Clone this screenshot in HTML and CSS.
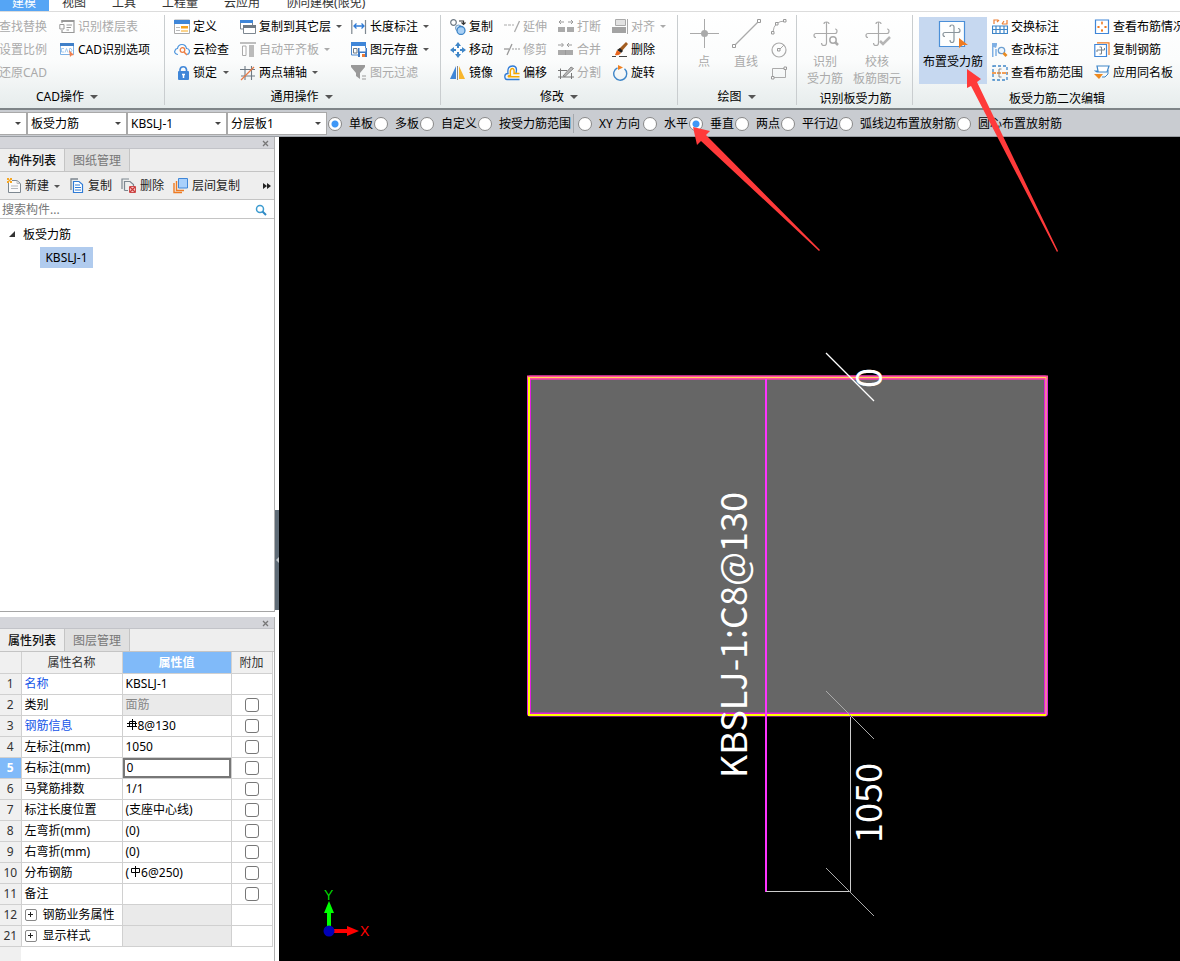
FILE: index.html
```html
<!DOCTYPE html>
<html lang="zh-CN">
<head>
<meta charset="utf-8">
<title>板受力筋</title>
<link rel="stylesheet" href="styles.css">
</head>
<body>
<div class="app">
  <nav class="menu">
    <button class="menu-tab active">建模</button><button class="menu-tab">视图</button><button class="menu-tab">工具</button><button class="menu-tab">工程量</button><button class="menu-tab">云应用</button><button class="menu-tab">协同建模(限免)</button>
  </nav>

  <header class="ribbon">
    <section class="group g-cad">
      <div class="tools">
        <div class="col">
          <button class="tool off">查找替换</button>
          <button class="tool off">设置比例</button>
          <button class="tool off">还原CAD</button>
        </div>
        <div class="col">
          <button class="tool off"><svg class="ico" viewBox="0 0 16 16"><path d="M3 4V1.500H15V13.500H3V11" fill="none" stroke="#999" stroke-width="1.200"/><path d="M2.500 2H15" stroke="#999" stroke-width="2"/><path d="M.8 5.500H5V10H.8Z" fill="#fff" stroke="#999"/><path d="M7.500 6H13M7.500 8.500H12M7.500 11H10" stroke="#999" stroke-width="1.200"/></svg>识别楼层表</button>
          <button class="tool"><svg class="ico" viewBox="0 0 16 16"><path d="M1.500 1.500H14.500V12.500H1.500Z" fill="#fff" stroke="#7fb2e6"/><path d="M1 1H15V4H1Z" fill="#3f7fc8"/><path d="M5 6.500H2.500V10H5M6 10.500L7.500 6.500L9 10.500M10.500 6.500V10H12L13 8.500L12 6.500Z" fill="none" stroke="#8fbce8" stroke-width=".8"/><path d="M10 8L15 13L12.500 13.500L11 15Z" fill="#ee8050"/></svg>CAD识别选项</button>
        </div>
      </div>
      <button class="caption">CAD操作<i class="caret"></i></button>
    </section>

    <section class="group g-common">
      <div class="tools">
        <div class="col">
          <button class="tool"><svg class="ico" viewBox="0 0 16 16"><path d="M.5 1H15.500V14.500H.5Z" fill="#fff" stroke="#aaa"/><path d="M0 1H16V5H0Z" fill="#3f86d8"/><path d="M2 8.500H6M2 11.500H6" stroke="#bbb"/><path d="M7 7H14V9.500H7Z" fill="#f6a21c"/><path d="M7 11H14V13H7Z" fill="#fbd38b"/></svg>定义</button>
          <button class="tool"><svg class="ico" viewBox="0 0 16 16"><path d="M4 12.500C1 12.500 .2 10 1 8.500C1.500 7 3 6.500 3.500 6.500C4 3.500 6 2.500 8 2.500C10.500 2.500 12 4 12.500 6.500C14.500 6.500 15.500 8 15.500 9.500C15.500 11.500 14 12.500 12.500 12.500" fill="none" stroke="#4b93dc" stroke-width="1.200"/><circle cx="8.500" cy="8" r="2.300" fill="none" stroke="#ee7f44" stroke-width="1.300"/><path d="M10 10L13 13" stroke="#ee7f44" stroke-width="1.500"/></svg>云检查</button>
          <button class="tool"><svg class="ico" viewBox="0 0 16 16"><path d="M6 7V4.500A3.300 3.300 0 0 1 12.500 4.500V7" fill="none" stroke="#3f86d8" stroke-width="1.600"/><rect x="4" y="6" width="11" height="9" rx="1" fill="#3f86d8"/><path d="M9.500 9V13M8 9.500H11" stroke="#fff" stroke-width="1.500"/></svg>锁定<i class="caret"></i></button>
        </div>
        <div class="col">
          <button class="tool"><svg class="ico" viewBox="0 0 16 16"><path d="M.5 1.500H12.500V10H.5Z" fill="#fff" stroke="#7d8790"/><path d="M0 1H13V4H0Z" fill="#3f86d8"/><path d="M3.500 7.500H15.500V14.500H3.500Z" fill="#fff" stroke="#7d8790"/><path d="M3 6H16V9H3Z" fill="#6f7a84"/></svg>复制到其它层<i class="caret wide"></i></button>
          <button class="tool off"><svg class="ico" viewBox="0 0 16 16"><path d="M0 1H16" stroke="#aaa" stroke-width="1.500"/><path d="M2.500 4H6V13.500H2.500Z" fill="#fff" stroke="#aaa"/><path d="M9 3H14V15H9Z" fill="#bbb"/></svg>自动平齐板<i class="caret wide"></i></button>
          <button class="tool"><svg class="ico" viewBox="0 0 16 16"><path d="M5 1V15M11.500 1V15M0 4.500H15M1 11H15" stroke="#6f7a84" stroke-width="1.100"/><path d="M1 15L14 2" stroke="#e87a45" stroke-width="1.300"/></svg>两点辅轴<i class="caret wide"></i></button>
        </div>
        <div class="col">
          <button class="tool"><svg class="ico" viewBox="0 0 16 16"><path d="M.8 1V15M14.500 1V15" stroke="#7d8790" stroke-width="1.200"/><path d="M3 7H13M5.500 4.500L3 7L5.500 9.500M10.500 4.500L13 7L10.500 9.500" fill="none" stroke="#2f7bd6" stroke-width="1.300"/></svg>长度标注<i class="caret wide"></i></button>
          <button class="tool"><svg class="ico" viewBox="0 0 16 16"><path d="M.5 1.500H14.500V13H.5Z" fill="#fff" stroke="#4a86cc"/><path d="M0 0H15V4H0Z" fill="#3f86d8"/><path d="M2.500 6.500H6V11H2.500Z" fill="none" stroke="#6f7a84"/><path d="M7 6H16V15H7Z" fill="#3d78c2"/><path d="M8.500 6H14.500V9.500H8.500Z" fill="#fff"/><path d="M9 11H14V15H9Z" fill="#fff"/><path d="M11 12H14V15H11Z" fill="#ee7b33"/></svg>图元存盘<i class="caret wide"></i></button>
          <button class="tool off"><svg class="ico" viewBox="0 0 16 16"><path d="M0 0H14V2L9 8V14L5 11V8L0 2Z" fill="#999"/><path d="M11 11H15M11 14H15" stroke="#999"/></svg>图元过滤</button>
        </div>
      </div>
      <button class="caption">通用操作<i class="caret"></i></button>
    </section>

    <section class="group g-edit">
      <div class="tools">
        <div class="col">
          <button class="tool"><svg class="ico" viewBox="0 0 16 16"><circle cx="3.500" cy="3.500" r="2.800" fill="#fff" stroke="#6f7a84" stroke-width="1.200"/><path d="M9 2H13.500V5M11.500 3.500L13.500 5.500L15.500 3.500" fill="none" stroke="#333" stroke-width="1.200"/><circle cx="8.500" cy="9" r="3" fill="#d5e7f7" stroke="#6f9bc4"/><circle cx="11" cy="11.500" r="4" fill="#a9d0f5" stroke="#3f86c8" stroke-width="1.300"/></svg>复制</button>
          <button class="tool"><svg class="ico" viewBox="0 0 16 16"><path d="M8 0L11 4H9V6H7V4H5ZM8 16L5 12H7V10H9V12H11ZM0 8L4 5V7H6V9H4V11ZM16 8L12 11V9H10V7H12V5Z" fill="#3f86c8"/></svg>移动</button>
          <button class="tool"><svg class="ico" viewBox="0 0 16 16"><path d="M6 1V14H0Z" fill="#3f86d8"/><path d="M7.500 1V15" stroke="#888"/><path d="M9 1V14H15Z" fill="#f8b62d"/></svg>镜像</button>
        </div>
        <div class="col">
          <button class="tool off"><svg class="ico" viewBox="0 0 16 16"><path d="M0 6H10" stroke="#aaa" stroke-dasharray="3 1"/><path d="M10.500 13L15.500 2" stroke="#aaa" stroke-width="1.300"/></svg>延伸</button>
          <button class="tool off"><svg class="ico" viewBox="0 0 16 16"><path d="M0 7H5" stroke="#999" stroke-width="1.300"/><path d="M8 7H16" stroke="#999" stroke-dasharray="2 1"/><path d="M3 13L8 2" stroke="#999" stroke-width="1.300"/></svg>修剪</button>
          <button class="tool"><svg class="ico" viewBox="0 0 16 16"><path d="M15.500 14.500H3Q.8 14.500 .8 11.500Q.8 8.500 4 8.500Q3 1 8.500 1Q12.500 1 12.500 5L12 8.500" fill="none" stroke="#2f7bd6" stroke-width="1.300"/><path d="M15.500 11.800H4.500Q3.500 10.500 6.500 10.500Q5.500 3.500 8.500 3.500Q10.500 3.500 10 8.500H15.500" fill="none" stroke="#f6a800" stroke-width="1.400"/></svg>偏移</button>
        </div>
        <div class="col">
          <button class="tool off"><svg class="ico" viewBox="0 0 16 16"><path d="M0 8H7V13H0ZM9 8H16V13H9Z" fill="#aaa"/><path d="M1 3H6M3 1L1 3L3 5M10 3H15M13 1L15 3L13 5" fill="none" stroke="#999"/></svg>打断</button>
          <button class="tool off"><svg class="ico" viewBox="0 0 16 16"><path d="M0 8H15V13H0Z" fill="#aaa"/><path d="M0 3H5M3.500 1L5.500 3L3.500 5M9 3H14M11 1L9 3L11 5M7.500 8V13" fill="none" stroke="#999"/></svg>合并</button>
          <button class="tool off"><svg class="ico" viewBox="0 0 16 16"><path d="M0 5.500H9M2.500 3.500V14M0 12H16M13.500 8V14" fill="none" stroke="#777"/><path d="M5 11L13 2L15.500 3.500L7 11.500Z" fill="#bbb" stroke="#666" stroke-width=".7"/></svg>分割</button>
        </div>
        <div class="col">
          <button class="tool off"><svg class="ico" viewBox="0 0 16 16"><path d="M3.500 .5H13.500V6.500H3.500Z" fill="#e2e2e2" stroke="#aaa"/><path d="M0 8H14V14H0Z" fill="#a3a3a3"/><path d="M15.500 0V15" stroke="#aaa"/></svg>对齐<i class="caret wide"></i></button>
          <button class="tool"><svg class="ico" viewBox="0 0 16 16"><path d="M14 0L16 2L10 9L7 7Z" fill="#a35d20"/><path d="M8 6L11 9L9 11L5 8Z" fill="#222"/><path d="M5 8L9 11Q7 14 3 13Z" fill="#e8641b"/><path d="M0 14.500H4M7 14.500H15" stroke="#444"/></svg>删除</button>
          <button class="tool"><svg class="ico" viewBox="0 0 16 16"><path d="M5.500 2.800A6.500 6.500 0 1 0 12.500 3.800" fill="none" stroke="#3f86c8" stroke-width="1.400"/><path d="M6 0L11 2.500L6 5Z" fill="#f08020"/></svg>旋转</button>
        </div>
      </div>
      <button class="caption">修改<i class="caret"></i></button>
    </section>

    <section class="group g-draw">
      <div class="tools">
        <button class="big off"><svg class="bigico" viewBox="0 0 30 32"><path d="M15.500 1V30M1 15.500H30" stroke="#aaa"/><circle cx="15.500" cy="15.500" r="3.500" fill="#aaa"/></svg>点</button>
        <button class="big off"><svg class="bigico" viewBox="0 0 30 32"><path d="M4 27L27 4" stroke="#aaa" stroke-width="1.200"/><path d="M1.500 26.500H4.500V29.500H1.500ZM26.500 1.500H29.500V4.500H26.500Z" fill="#fff" stroke="#999"/></svg>直线</button>
        <div class="col">
          <button class="tool off" aria-label="弧"><svg class="ico" viewBox="0 0 16 16"><path d="M2 13Q3 2 14 2" fill="none" stroke="#aaa"/><path d="M.5 12.500H3V15H.5ZM4.500 3.500H7V6H4.500ZM12.500 .5H15V3H12.500Z" fill="#fff" stroke="#999"/></svg></button>
          <button class="tool off" aria-label="圆"><svg class="ico" viewBox="0 0 16 16"><circle cx="8" cy="8" r="7" fill="none" stroke="#aaa" stroke-width="1.200"/><path d="M8 8L13 3" stroke="#aaa"/><path d="M6.500 6.500H9V9H6.500Z" fill="#fff" stroke="#999"/></svg></button>
          <button class="tool off" aria-label="矩形"><svg class="ico" viewBox="0 0 16 16"><path d="M1.500 3.500H14.500V12.500H1.500Z" fill="none" stroke="#aaa"/><path d="M.5 11.500H3V14H.5ZM13 2H15.500V4.500H13Z" fill="#fff" stroke="#999"/></svg></button>
        </div>
      </div>
      <button class="caption">绘图<i class="caret"></i></button>
    </section>

    <section class="group g-detect">
      <div class="tools">
        <button class="big off"><svg class="bigico" viewBox="0 0 30 32"><path d="M14 6Q14 4 16.500 4Q19 4 19 6M16.500 4V25Q16.500 27.500 14 27.500Q11.500 27.500 11.500 25M6 19.500Q4 19.500 4 17.500Q4 15.500 6 15.500H25Q27 15.500 27 13Q27 11 25 11" fill="none" stroke="#aaa" stroke-width="1.200"/><circle cx="23" cy="22" r="3.200" fill="#fff" stroke="#aaa" stroke-width="1.500"/><path d="M25 24L28 27" stroke="#aaa" stroke-width="2.500"/></svg>识别<br>受力筋</button>
        <button class="big off"><svg class="bigico" viewBox="0 0 30 32"><path d="M14 6Q14 4 16.500 4Q19 4 19 6M16.500 4V25Q16.500 27.500 14 27.500Q11.500 27.500 11.500 25M6 19.500Q4 19.500 4 17.500Q4 15.500 6 15.500H25Q27 15.500 27 13Q27 11 25 11" fill="none" stroke="#aaa" stroke-width="1.200"/><path d="M18 23L21 26L28 19" fill="none" stroke="#b5b5b5" stroke-width="2.500"/></svg>校核<br>板筋图元</button>
      </div>
      <div class="caption low">识别板受力筋</div>
    </section>

    <section class="group g-second">
      <div class="tools">
        <button class="big chosen"><svg class="bigico" viewBox="0 0 30 32"><path d="M1.500 3.500H26.500V28.500H1.500Z" fill="#fdfefe" stroke="#4b8fd8" stroke-width="1.200"/><path d="M12 9Q12 7 14 7Q16 7 16 9V22Q16 24.500 14 24.500Q12 24.500 12 22M7 18.500Q5 18.500 5 16.500Q5 14.500 7 14.500H20Q22 14.500 22 12.500Q22 10.500 20 10.500" fill="none" stroke="#8a959c" stroke-width="1.200"/><path d="M21 20L30 27L25 27L21 30Z" fill="#ee7b23"/></svg>布置受力筋</button>
        <div class="col">
          <button class="tool"><svg class="ico" viewBox="0 0 16 16"><path d="M.5 7H15.500V14.500H.5ZM.5 10.500H15.500M4 7V14.500M8 7V14.500M12 7V14.500" fill="none" stroke="#3f86c8" stroke-width="1.200"/><path d="M2 5V1H6M5 3L7 1M15 1V5H10M12 2L10 5" fill="none" stroke="#ee7f33" stroke-width="1.200"/></svg>交换标注</button>
          <button class="tool"><svg class="ico" viewBox="0 0 16 16"><path d="M0 1H5V3L4 6L1.500 5V15H0Z" fill="#7fb0e4"/><path d="M4 7V14" stroke="#7fb0e4" stroke-width="1.500"/><circle cx="9.500" cy="8.500" r="3.200" fill="#eef6fd" stroke="#6d9fd0" stroke-width="1.300"/><path d="M11.500 11L14.500 14" stroke="#e88a20" stroke-width="2.800"/></svg>查改标注</button>
          <button class="tool"><svg class="ico" viewBox="0 0 16 16"><path d="M1 1H15V15H1Z" fill="none" stroke="#3f86c8" stroke-width="1.300" stroke-dasharray="3 2"/><path d="M0 8H16" stroke="#f08020" stroke-width="1.300" stroke-dasharray="4 1"/><path d="M9.500 4H7V12H9.500" fill="none" stroke="#888"/></svg>查看布筋范围</button>
        </div>
        <div class="col">
          <button class="tool"><svg class="ico" viewBox="0 0 16 16"><path d="M1.500 1H14.500V14.500H1.500Z" fill="#fff" stroke="#3f86d8" stroke-width="1.200"/><path d="M8 2.500V5.500M7 4H9M8 10V13M7 11.500H9M3 8H6M4.500 7V9M10 8H13M11.500 7V9" fill="none" stroke="#ee7b23" stroke-width="1.200"/></svg>查看布筋情况</button>
          <button class="tool"><svg class="ico" viewBox="0 0 16 16"><path d="M3 .8H15V13" fill="none" stroke="#ee7b23" stroke-width="1.200"/><path d="M.8 2.500H12.500V14.500H.8Z" fill="#fff" stroke="#3f86d8" stroke-width="1.200"/><path d="M5.500 5H7.500V12H5.500M3 10V8H10.500V6" fill="none" stroke="#78838c"/></svg>复制钢筋</button>
          <button class="tool"><svg class="ico" viewBox="0 0 16 16"><path d="M3 1H15L13 7H3L1.500 6H4Z" fill="#fff" stroke="#3f86c8" stroke-width="1.200"/><path d="M14 5V9L11 12H8" fill="none" stroke="#3f86c8"/><path d="M0 9H9L5 14Z" fill="#ee8a20"/></svg>应用同名板</button>
        </div>
      </div>
      <div class="caption low">板受力筋二次编辑</div>
    </section>
  </header>

  <form class="options">
    <span class="pick first"><select aria-label="楼层"><option></option></select></span>
    <span class="pick"><select aria-label="构件类型"><option>板受力筋</option></select></span>
    <span class="pick"><select aria-label="构件"><option>KBSLJ-1</option></select></span>
    <span class="pick"><select aria-label="分层"><option>分层板1</option></select></span>
    <div class="radios">
      <label><input type="radio" name="range" checked>单板</label>
      <label><input type="radio" name="range">多板</label>
      <label><input type="radio" name="range">自定义</label>
      <label><input type="radio" name="range">按受力筋范围</label>
    </div>
    <div class="radios second">
      <label class="xy"><input type="radio" name="dir">XY 方向</label>
      <label><input type="radio" name="dir">水平</label>
      <label><input type="radio" name="dir" checked>垂直</label>
      <label><input type="radio" name="dir">两点</label>
      <label><input type="radio" name="dir">平行边</label>
      <label><input type="radio" name="dir">弧线边布置放射筋</label>
      <label><input type="radio" name="dir">圆心布置放射筋</label>
    </div>
  </form>

  <main class="work">
    <aside class="side">
      <section class="panel list">
        <div class="strip"><button class="close" aria-label="关闭"><svg viewBox="0 0 7 7"><path d="M1 1L6 6M6 1L1 6" stroke="#777" stroke-width="1.300"/></svg></button></div>
        <div class="tabs"><button class="tab on">构件列表</button><button class="tab">图纸管理</button></div>
        <div class="bar">
          <button class="act"><svg class="ico" viewBox="0 0 16 16"><path d="M2.500 4V14.500H14.500V5.500L11 2.500H6" fill="#fafafa" stroke="#7d8790"/><path d="M11 2.500V5.500H14.500M5 8H12M5 10.500H12" fill="none" stroke="#b5b9bd"/><path d="M1 0H3V2H1ZM4 0H6V2H4ZM1 3H3V5H1ZM4 3H6V5H4ZM2.500 1.500H4.500V3.500H2.500Z" fill="#f5a623"/></svg>新建<i class="caret"></i></button>
          <button class="act"><svg class="ico" viewBox="0 0 16 16"><path d="M2 12V1H9" fill="none" stroke="#7d8790" stroke-width="1.300"/><path d="M4.500 3.500H10L13.500 6.500V14.500H4.500Z" fill="#fff" stroke="#2f7bd6" stroke-width="1.200"/><path d="M6 7H11M6 9.500H12M6 12H12" stroke="#2f7bd6"/></svg>复制</button>
          <button class="act"><svg class="ico" viewBox="0 0 16 16"><path d="M1 11V1H8M3.500 12.500V3.500H9L12.500 6.500V8M3.500 12.500H7" fill="none" stroke="#7d8790" stroke-width="1.200"/><path d="M8.500 8.500H14.500V14.500H8.500Z" fill="#f6c6c6" stroke="#cc4b4b"/><path d="M9 9L14 14M14 9L9 14" stroke="#c93a3a" stroke-width="1.200"/></svg>删除</button>
          <button class="act"><svg class="ico" viewBox="0 0 16 16"><path d="M1 5V14.500H9" fill="none" stroke="#ee7b23" stroke-width="1.400"/><path d="M3.500 3V12.500H11" fill="none" stroke="#ee7b23" stroke-width="1.400"/><path d="M5.500 .5H14.500V10H5.500Z" fill="#a9d0fb" stroke="#3f86d8"/></svg>层间复制</button>
          <button class="more" aria-label="更多"><svg viewBox="0 0 8 6"><path d="M0 0L4 3L0 6ZM4 0L8 3L4 6Z" fill="#222"/></svg></button>
        </div>
        <label class="search"><input type="text" placeholder="搜索构件..." aria-label="搜索构件"><svg viewBox="0 0 12 12"><circle cx="5" cy="5" r="3.500" fill="#fff" stroke="#3c9bd0" stroke-width="1.500"/><path d="M7.500 7.500L11 11" stroke="#2f8ac4" stroke-width="2"/></svg></label>
        <div class="tree">
          <div class="node"><svg viewBox="0 0 7 7"><path d="M6 0V6H0Z" fill="#333"/></svg>板受力筋</div>
          <div class="leaf"><span>KBSLJ-1</span></div>
        </div>
      </section>

      <section class="panel props">
        <div class="strip"><button class="close" aria-label="关闭"><svg viewBox="0 0 7 7"><path d="M1 1L6 6M6 1L1 6" stroke="#777" stroke-width="1.300"/></svg></button></div>
        <div class="tabs"><button class="tab on">属性列表</button><button class="tab">图层管理</button></div>
        <div class="sheet">
        <table>
          <colgroup><col class="c-no"><col class="c-name"><col class="c-val"><col class="c-add"></colgroup>
          <thead><tr><th></th><th>属性名称</th><th class="hot">属性值</th><th>附加</th></tr></thead>
          <tbody>
            <tr><th>1</th><td class="key">名称</td><td>KBSLJ-1</td><td></td></tr>
            <tr><th>2</th><td>类别</td><td class="dim">面筋</td><td class="chk"><input type="checkbox" aria-label="类别附加"></td></tr>
            <tr><th>3</th><td class="key">钢筋信息</td><td><svg class="rebar" viewBox="0 0 10 11"><path d="M5.500 0V11M2.500 2.500H8.500V7.500H2.500ZM0 7.500H10M0 4.500H10" fill="none" stroke="#000"/></svg>8@130</td><td class="chk"><input type="checkbox" aria-label="钢筋信息附加"></td></tr>
            <tr><th>4</th><td>左标注(mm)</td><td>1050</td><td class="chk"><input type="checkbox" aria-label="左标注附加"></td></tr>
            <tr><th class="hot">5</th><td>右标注(mm)</td><td class="edit"><input type="text" value="0" aria-label="右标注"></td><td class="chk"><input type="checkbox" aria-label="右标注附加"></td></tr>
            <tr><th>6</th><td>马凳筋排数</td><td>1/1</td><td class="chk"><input type="checkbox" aria-label="马凳筋排数附加"></td></tr>
            <tr><th>7</th><td>标注长度位置</td><td>(支座中心线)</td><td class="chk"><input type="checkbox" aria-label="标注长度位置附加"></td></tr>
            <tr><th>8</th><td>左弯折(mm)</td><td>(0)</td><td class="chk"><input type="checkbox" aria-label="左弯折附加"></td></tr>
            <tr><th>9</th><td>右弯折(mm)</td><td>(0)</td><td class="chk"><input type="checkbox" aria-label="右弯折附加"></td></tr>
            <tr><th>10</th><td>分布钢筋</td><td>(<svg class="rebar" viewBox="0 0 10 11"><path d="M5.500 0V11M1.500 2.500H9.500V6.500H1.500Z" fill="none" stroke="#000"/></svg>6@250)</td><td class="chk"><input type="checkbox" aria-label="分布钢筋附加"></td></tr>
            <tr><th>11</th><td>备注</td><td></td><td class="chk"><input type="checkbox" aria-label="备注附加"></td></tr>
            <tr><th>12</th><td><div class="fold"><button class="plus" aria-label="展开"><svg viewBox="0 0 5 5"><path d="M2.500 0V5M0 2.500H5" stroke="#222"/></svg></button>钢筋业务属性</div></td><td class="dim"></td><td></td></tr>
            <tr><th>21</th><td><div class="fold"><button class="plus" aria-label="展开"><svg viewBox="0 0 5 5"><path d="M2.500 0V5M0 2.500H5" stroke="#222"/></svg></button>显示样式</div></td><td class="dim"></td><td></td></tr>
          </tbody>
        </table>
        </div>
      </section>
    </aside>

    <div class="splitter"><button class="handle" aria-label="收起"><svg viewBox="0 0 3 6"><path d="M3 0V6L0 3Z" fill="#c3c8cc"/></svg></button></div>

    <section class="canvas">
      <svg class="drawing">
        <rect x="250" y="240" width="517" height="338" fill="#666"/>
        <g fill="none">
          <rect x="250" y="240.500" width="517" height="337" rx="1" stroke="#e020e0" stroke-width="4"/>
          <path d="M248 240.500H769" stroke="#ff4f9a" stroke-width="4"/>
          <path d="M250 240V578H767" stroke="#ff0" stroke-width="2"/>
          <path d="M250 240.500H767V578" stroke="#ffd75a"/>
          <path d="M487 242V755" stroke="#f3f" stroke-width="2"/>
          <path d="M487 754.500H571.500V580" stroke="#ccc"/>
          <path d="M547 216L595 264" stroke="#fff" stroke-width="1.200"/>
          <path d="M547 554L595 602M547 731L595 779" stroke="#aaa"/>
        </g>
        <g class="dim-text">
          <text transform="translate(468 641) rotate(-90)">KBSLJ-1:C8@130</text>
          <text transform="translate(603 251) rotate(-90)">0</text>
          <text transform="translate(603 706) rotate(-90)">1050</text>
        </g>
        <path d="M50 793V775" stroke="#0f0" stroke-width="4"/>
        <path d="M50 764L55 776H45Z" fill="#0f0"/>
        <path d="M50 794H69" stroke="#f00" stroke-width="4"/>
        <path d="M80 794L68 799V789Z" fill="#f00"/>
        <circle cx="50" cy="794" r="5.500" fill="#0000b8"/>
        <g class="axis-text"><text x="45" y="763" fill="#0d0">Y</text><text x="81" y="799" fill="#f00">X</text></g>
      </svg>
    </section>
  </main>

  <svg class="pointers" aria-hidden="true">
    <path d="M693 127L710 131L706 135L820 250L819 251L701 141L697 145Z" fill="#ff3a3a"/>
    <path d="M967 69L981 79L977 82L1058 251L1057 252L971 86L967 88Z" fill="#ff3a3a"/>
  </svg>
</div>
</body>
</html>
```
FILE: styles.css
```css
* { box-sizing: border-box; }
body {
  margin: 0;
  font: 12px/16px "Noto Sans", "Noto Sans CJK SC", sans-serif;
  color: #000;
}
button, input, select { font: inherit; color: inherit; margin: 0; }
button { padding: 0; border: 0; background: none; white-space: nowrap; }
svg { flex: none; }

.app { position: relative; display: flex; flex-direction: column; height: 100vh; overflow: hidden; background: #fff; }

/* The menu strip is scrolled partly out of view above the ribbon. */
.menu { display: flex; align-items: flex-end; flex: none; height: 12px; overflow: hidden; border-bottom: 1px solid #dcdcdc; margin-left: -1px; }
.menu-tab { flex: none; height: 16px; padding: 0 13px; color: #333; line-height: 16px; }
.menu-tab.active { background: #55a5f5; color: #fff; }

.ribbon { display: flex; flex: none; height: 98px; padding-top: 3px; background: linear-gradient(#fff, #fbfcfc 50%, #e6ecec); border-bottom: 2px solid #7e8487; overflow: hidden; }
.group { display: flex; flex: none; flex-direction: column; border-right: 1px solid #c9cdcf; margin-bottom: 3px; }
.tools { display: grid; flex: none; height: 71px; }
.col { display: flex; flex-direction: column; }
.tool { display: flex; align-items: center; height: 23px; gap: 3px; }
.ico { width: 16px; height: 16px; }
.off { color: #aaa; }
.caption { display: flex; flex: none; align-items: center; justify-content: center; height: 22px; }
.caption.low { padding-top: 3px; }
.caret { flex: none; width: 0; height: 0; margin-left: 3px; border: 3px solid transparent; border-top-color: #555; border-bottom: 0; }
.caret.wide { margin-left: 2px; }
.off .caret { border-top-color: #aaa; }
.caption .caret { margin-left: 6px; border-width: 4px 4px 0; }

.g-cad { width: 165px; }
.g-cad .tools { grid-template-columns: 60px 1fr; margin-left: -1px; }
.g-cad .caption { padding-right: 30px; }
.g-common { width: 276px; padding-left: 9px; }
.g-common .tools { grid-template-columns: 66px 111px 1fr; }
.g-common .caption { padding-right: 11px; }
.g-edit { width: 237px; padding-left: 9px; }
.g-edit .tools { grid-template-columns: repeat(3, 54px) 1fr; }
.g-edit .caption { padding-right: 9px; }
.g-draw { width: 119px; padding-left: 5px; }
.g-draw .tools { grid-template-columns: 42px 42px 1fr; }
.g-draw .caption { padding-right: 6px; }
.g-draw .col { align-items: center; padding-right: 6px; }
.g-detect { width: 116px; padding-left: 2px; }
.g-detect .tools { grid-template-columns: 52px 52px 1fr; }
.g-second { flex: 1 0 267px; padding-left: 6px; border-right: 0; }
.g-second .tools { grid-template-columns: 73px 102px 1fr; }
.g-second .caption { margin-left: 15px; width: 246px; }

.big { display: flex; flex-direction: column; align-items: center; padding-top: 3px; line-height: 17px; }
.bigico { display: block; width: 30px; height: 32px; margin-bottom: 3px; overflow: visible; }
.big.chosen { width: 68px; height: 67px; margin-top: 2px; padding-top: 1px; background: #c6d8f0; }

.options { display: flex; flex: none; align-items: center; height: 27px; background: #c9ccd1; border-bottom: 1px solid #9a9ea3; overflow: hidden; }
.pick { display: grid; flex: none; width: 100px; align-items: center; }
.pick.first { width: 27px; }
.pick > select, .pick::after { grid-area: 1 / 1; }
.pick select { width: 100%; height: 23px; padding: 1px 3px 0; border: 1px solid #a9a9a9; border-left: 0; border-radius: 0; background: #fff; appearance: none; }
.pick + .pick select { border-left: 1px solid #a9a9a9; }
.pick::after { content: ""; justify-self: end; width: 0; margin-right: 6px; border: 3px solid transparent; border-top-color: #444; border-bottom: 0; pointer-events: none; }
.radios { display: flex; flex: none; align-items: center; gap: 1px; padding-left: 1px; }
.radios label { display: flex; align-items: center; gap: 7px; line-height: 18px; padding-top: 1px; white-space: nowrap; }
.radios label.xy { padding-right: 2px; }
.radios.second { margin-left: 2px; padding-left: 4px; border-left: 1px solid #a5a8ad; }
.radios input { appearance: none; width: 14px; height: 14px; border: 1px solid #888; border-radius: 50%; background: #fff; }
.radios input:checked { background: radial-gradient(circle, #3f97f6 0 3px, #fff 4px); }

.work { display: flex; flex: 1; min-height: 0; }
.side { display: flex; flex: none; flex-direction: column; gap: 5px; width: 275px; }
.panel { display: flex; flex-direction: column; border-right: 1px solid #b0b0b0; background: #fff; }
.panel.list { flex: 1; min-height: 0; border-bottom: 1px solid #a5a5a5; }
.panel.props { flex: none; height: 344px; }
.strip { display: flex; align-items: center; justify-content: flex-end; height: 12px; padding: 1px 5px 0 0; background: #d4d5da; border-bottom: 1px solid #c2c3c8; }
.close, .close svg { display: block; width: 7px; height: 7px; }
.tabs { display: flex; height: 23px; background: #eee; border-bottom: 1px solid #c4c4c4; }
.tab { width: 65px; padding-top: 2px; border-right: 1px solid #c4c4c4; background: #e0e0e0; color: #777; }
.tab.on { background: #eee; color: #111; font-weight: 500; }
.bar { display: flex; align-items: center; height: 28px; padding: 1px 3px 0 6px; gap: 8px; background: #eee; border-bottom: 1px solid #c4c4c4; color: #222; }
.act { display: flex; align-items: center; gap: 3px; }
.act .caret { margin-left: 2px; }
.act + .act { margin-left: 1px; }
.more { display: flex; margin-left: auto; }
.more svg { width: 8px; height: 6px; }
.search { display: flex; align-items: center; height: 19px; padding: 1px 7px 0 2px; border-bottom: 1px solid #c4c4c4; }
.search input { flex: 1; min-width: 0; padding: 0; border: 0; outline: 0; background: none; }
.search input::placeholder { color: #777; }
.search svg { width: 12px; height: 12px; }
.tree { padding: 3px 0 0 9px; }
.node { display: flex; align-items: center; gap: 7px; height: 25px; }
.node svg { width: 7px; height: 7px; }
.leaf { padding-left: 31px; }
.leaf span { display: inline-block; min-width: 53px; background: #b0cbee; line-height: 21px; text-align: center; }

.sheet { flex: 1; background: linear-gradient(90deg, #f0f0f0 21px, #fff 21px); }
table { width: 272px; table-layout: fixed; border-collapse: collapse; }
.c-no { width: 21px; }
.c-name { width: 101px; }
.c-val { width: 109px; }
.c-add { width: 41px; }
th, td { height: 21px; padding: 0 3px; border: 1px solid #d0d0d0; border-left: 0; line-height: 16px; white-space: nowrap; text-align: left; background: #fff; }
th { padding: 0; background: #f0f0f0; font-weight: 400; text-align: center; color: #333; }
thead th { padding-top: 1px; border-top: 0; }
th.hot { background: #80baf9; color: #fff; font-weight: 700; }
.key { color: #1556e8; }
.dim { background: #eaeaea; color: #888; }
.chk { padding: 0; text-align: center; }
.chk input { display: block; width: 14px; height: 14px; margin: 0 auto; appearance: none; border: 1px solid #777; border-radius: 3px; background: #fff; }
.edit { padding: 0; }
.edit input { display: block; width: 100%; height: 20px; padding: 0 2px; border: 2px solid #777; border-radius: 0; outline: 0; background: #fff; }
.rebar { width: 10px; height: 11px; margin: 0 1px; vertical-align: 0; }
.fold { display: flex; align-items: center; gap: 6px; }
.plus { display: flex; flex: none; align-items: center; justify-content: center; width: 12px; height: 12px; border: 1px solid #888; border-radius: 2px; background: #fff; }
.plus svg { width: 5px; height: 5px; }

.splitter { flex: none; width: 4px; padding-top: 373px; }
.handle { display: flex; align-items: center; justify-content: flex-end; width: 4px; height: 100px; background: #5f6b76; }
.handle svg { width: 3px; height: 6px; }

.canvas { flex: 1; min-width: 0; background: #000; overflow: hidden; }
.drawing { display: block; width: 100%; height: 100%; }
.dim-text { fill: #fff; font: 36px "Noto Sans CJK SC", sans-serif; }
.axis-text { font: 14px "Liberation Sans", sans-serif; }
.pointers { position: absolute; inset: 0; width: 100%; height: 100%; pointer-events: none; }
```
